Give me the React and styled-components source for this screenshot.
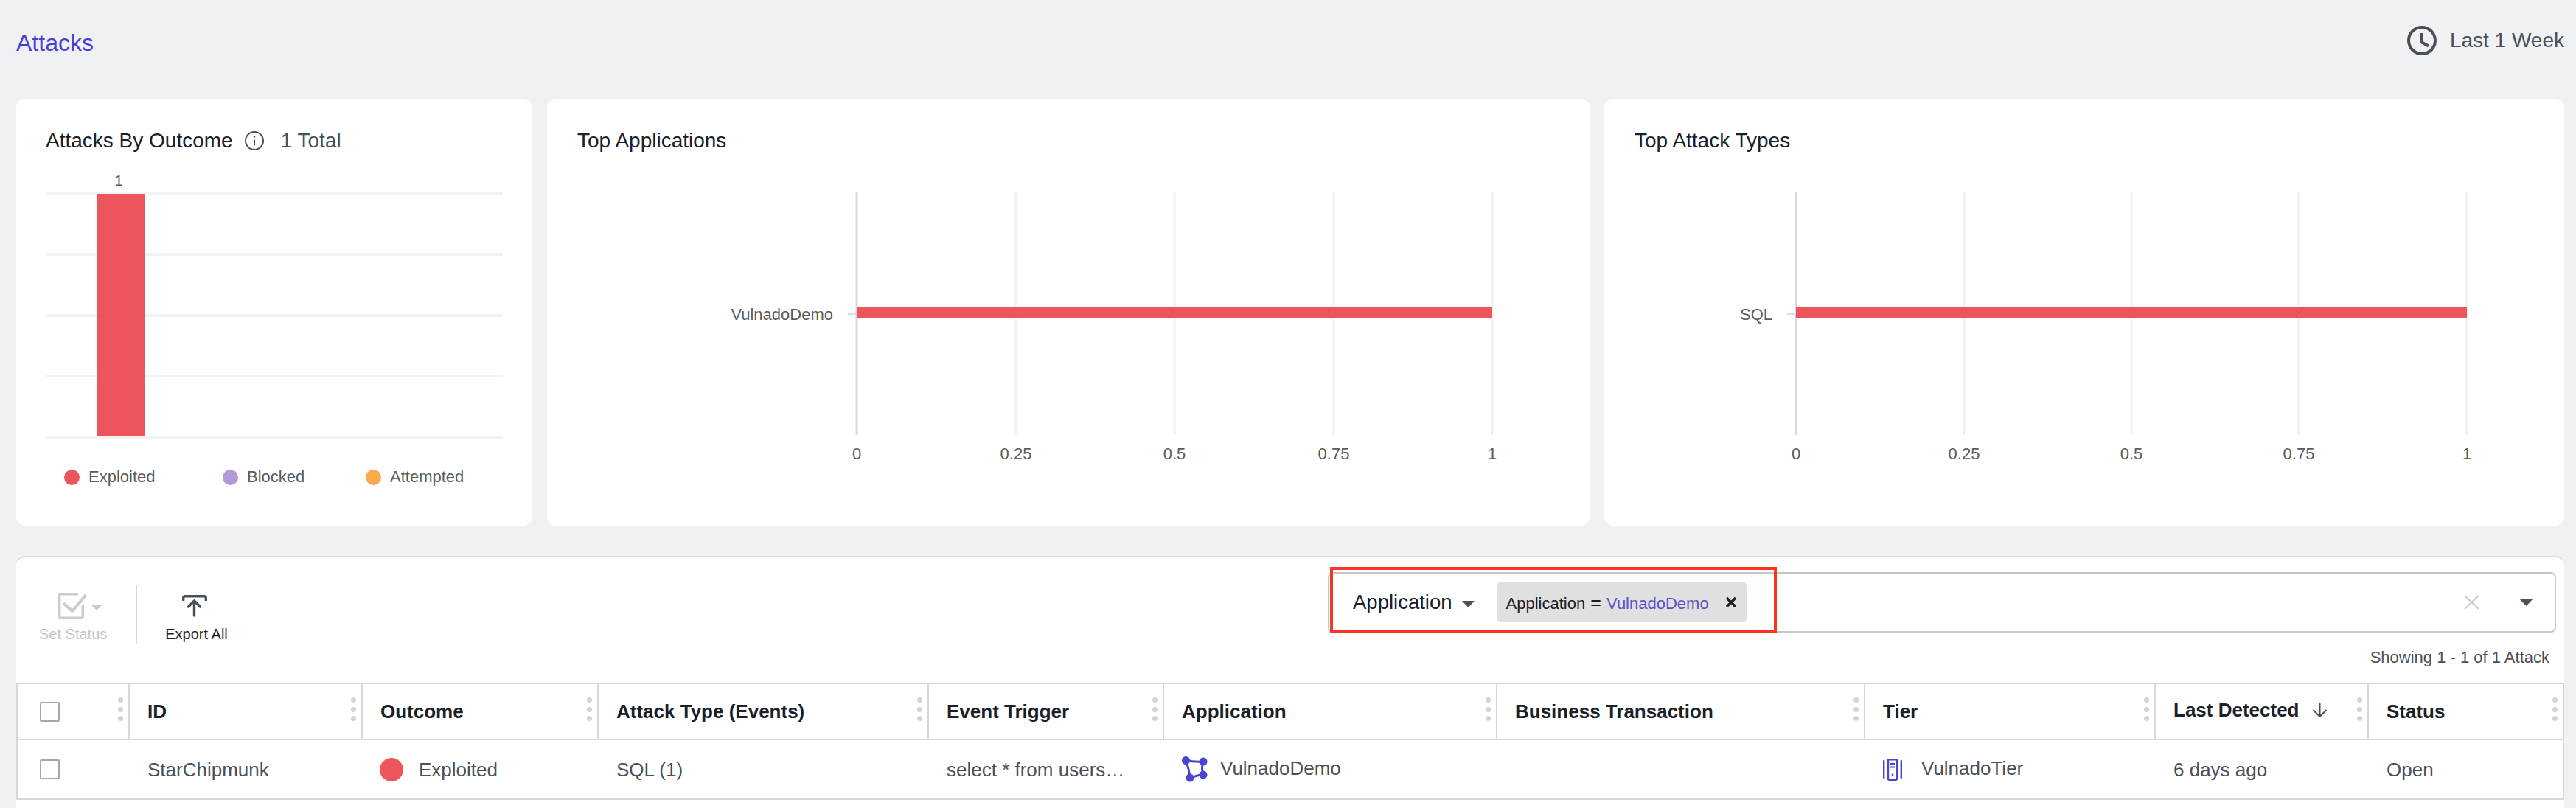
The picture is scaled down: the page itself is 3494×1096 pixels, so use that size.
import React from 'react';
import styled, { createGlobalStyle } from 'styled-components';

const TEXT = '#4a5058';
const DARK = '#1a2027';
const RED = '#ec555c';
const INDIGO = '#4b43d1';
const COLS = '152px 316px 320px 448px 319px 452px 499px 394px 289px 265px';

const Global = createGlobalStyle`
  html, body { margin: 0; padding: 0; background: #f0f1f3; }
  body { font-family: "Liberation Sans", Arial, sans-serif; }
  * { box-sizing: border-box; }
`;

const Page = styled.div`
  width: 3494px; height: 1096px; overflow: hidden;
  padding: 0 16px 0 22px; background: #f0f1f3;
  display: flex; flex-direction: column;
`;
const Header = styled.header`
  height: 110px; margin-bottom: 24px;
  display: flex; align-items: center; justify-content: space-between;
`;
const PageTitle = styled.a`
  font-size: 32px; line-height: 40px; color: #4a3fd4; padding-top: 6px;
`;
const TimeRange = styled.div`
  display: flex; align-items: center; gap: 18px;
  font-size: 28px; line-height: 40px; color: ${TEXT};
`;
const Cards = styled.section`
  display: grid; grid-template-columns: 700px 1414px 1302px; gap: 20px;
  height: 579px; flex: none;
`;
const Card = styled.article`
  background: #fff; border-radius: 12px; padding: 41px 0 0 ${p => p.$inset}px;
  min-width: 0;
`;
const CardHead = styled.div`
  display: flex; align-items: center; height: 32px;
`;
const CardTitle = styled.h2`
  margin: 0; font-size: 28px; line-height: 32px; font-weight: 400; color: ${DARK};
`;
const InfoWrap = styled.span`
  display: flex; margin: 0 23px 0 16px;
`;
const TotalText = styled.span`
  font-size: 28px; line-height: 32px; color: ${TEXT};
`;
const ChartSvg = styled.svg`
  display: block; margin-top: ${p => p.$top}px; overflow: visible;
`;
const AxisLabel = styled.text`
  font-family: "Liberation Sans", Arial, sans-serif; font-size: ${p => p.$size || 22}px; fill: #5b5b5b;
`;
const Legend = styled.div`
  display: grid; grid-template-columns: 215px 194px auto;
  margin-top: 35px; padding-left: 25px;
`;
const LegendItem = styled.div`
  display: flex; align-items: center; gap: 12px;
  font-size: 22px; line-height: 24px; color: #5b5b5b;
`;
const LegendDot = styled.span`
  width: 21px; height: 21px; border-radius: 50%; background: ${p => p.$color};
`;
const Panel = styled.section`
  flex: 1; margin-top: 41px; background: #fff;
  border-top: 2px solid #dcdcdc; border-radius: 12px 12px 0 0;
`;
const Toolbar = styled.div`
  height: 170px; display: flex; justify-content: space-between;
`;
const Actions = styled.div`
  display: flex; padding: 38px 0 0 31px; height: 117px;
`;
const Action = styled.div`
  display: flex; flex-direction: column; align-items: center;
  padding-top: 10px; height: 79px;
  font-size: 20px; line-height: 24px; color: ${p => p.$disabled ? '#c4c4c4' : DARK};
`;
const ActionIcon = styled.div`
  height: 36px; margin-bottom: 8px; display: flex; align-items: flex-start; gap: 6px;
  margin-left: ${p => p.$shiftRight || 0}px;
  margin-right: ${p => p.$shiftLeft || 0}px;
`;
const CaretSlot = styled.span`
  display: flex; margin-top: 17px;
`;
const Divider = styled.div`
  width: 2px; height: 79px; background: #d8d8d8; margin: 0 38px 0 39px;
`;
const FilterArea = styled.div`
  width: 1666px; margin: 20px 11px 0 0;
`;
const FilterBox = styled.div`
  position: relative; height: 82px; border: 2px solid #c6c6c6; border-radius: 7px;
  display: flex; align-items: center; padding: 0 29px 0 32px;
`;
const FilterKey = styled.span`
  font-size: 27.5px; line-height: 32px; color: ${DARK};
`;
const KeyCaret = styled.span`
  display: flex; margin: 4px 31px 0 13px;
`;
const Chip = styled.div`
  width: 338px; height: 54px; background: #e0e0e0; border-radius: 4px;
  display: flex; align-items: center; justify-content: space-between;
  padding: 0 14px 0 12px; font-size: 22px; color: ${DARK};
`;
const ChipText = styled.span`
  line-height: 26px; padding-top: 4px; white-space: pre;
`;
const ChipEquals = styled.span`
  font-size: 25px; line-height: 20px; margin-left: 1px;
`;
const ChipValue = styled.span`
  color: #5a50c8; margin-left: 1px;
`;
const FilterEnd = styled.div`
  margin-left: auto; display: flex; align-items: center; gap: 54px;
`;
const Highlight = styled.div`
  position: absolute; left: 1px; top: -9px; width: 606px; height: 90px;
  border: 4px solid #fa3420; pointer-events: none;
`;
const Showing = styled.div`
  margin: 22px 9px 0 0; text-align: right;
  font-size: 22px; line-height: 24px; color: ${TEXT};
`;
const HeadRow = styled.div`
  display: grid; grid-template-columns: ${COLS};
  border: 2px solid #d8d8d8; border-width: 2px 0 2px 2px; height: 78px;
`;
const HeadCell = styled.div`
  display: flex; align-items: center; justify-content: space-between;
  padding: 0 7px 0 ${p => p.$pad || 24}px; border-right: 2px solid #d8d8d8;
  font-size: 26px; font-weight: 700; color: ${DARK};
`;
const HeadLabel = styled.span`
  display: flex; align-items: center; gap: 17px; line-height: 30px;
  padding-bottom: ${p => p.$raised ? 4 : 0}px;
`;
const Kebab = styled.span`
  display: flex; flex-direction: column; gap: 5.5px; margin-top: -6px;
`;
const KebabDot = styled.i`
  display: block; width: 7px; height: 7px; border-radius: 50%; background: #d4d4d4;
`;
const BodyRow = styled.div`
  display: grid; grid-template-columns: ${COLS}; height: 81px;
  border: 2px solid #d8d8d8; border-width: 0 0 2px 2px; position: relative;
  border-right: 2px solid #d8d8d8;
`;
const BodyCell = styled.div`
  display: flex; align-items: center; min-width: 0; white-space: nowrap;
  padding-left: ${p => p.$pad || 24}px; gap: ${p => p.$gap || 0}px;
  font-size: 26px; line-height: 30px; color: ${TEXT};
`;
const Raised = styled.span`
  margin-top: -4px;
`;
const Check = styled.span`
  display: block; width: 27px; height: 27px; border: 2px solid #a5a8ab; border-radius: 2px;
`;
const OutcomeDot = styled.span`
  width: 32px; height: 32px; border-radius: 50%; background: ${RED}; flex: none; margin-left: -1px;
`;

const Caret = ({ w = 17, h = 9, color = TEXT }) => (
  <svg width={w} height={h} viewBox="0 0 17 9" preserveAspectRatio="none"><path d="M0 0h17L8.5 9z" fill={color} /></svg>
);

const Clock = () => (
  <svg width="40" height="40" viewBox="0 0 40 40" fill="none" stroke={TEXT} strokeWidth="4">
    <circle cx="20" cy="20" r="18" />
    <path d="M19 10v12l10 5.5" />
  </svg>
);

const Info = () => (
  <svg width="26" height="26" viewBox="0 0 26 26" fill="none" stroke={TEXT} strokeWidth="2">
    <circle cx="13" cy="13" r="12" />
    <path d="M13 11.5v7.5" />
    <circle cx="13" cy="7.5" r="1.2" fill={TEXT} stroke="none" />
  </svg>
);

const SetStatusIcon = () => (
  <svg width="39" height="36" viewBox="0 0 39 36" fill="none" stroke="#cccccc" strokeWidth="3.4">
    <path d="M27 1.7H4Q1.7 1.7 1.7 4V32Q1.7 34.3 4 34.3H31Q33.3 34.3 33.3 32V17" />
    <path d="M7 14l12 11L37.5 3" strokeWidth="4.2" />
  </svg>
);

const ExportIcon = () => (
  <svg width="34" height="36" viewBox="0 0 34 36" fill="none" stroke={TEXT} strokeWidth="3.4">
    <path d="M1.7 11V7Q1.7 4.7 4 4.7H30Q32.3 4.7 32.3 7V11" />
    <path d="M16.5 31V11M8.5 19l8-8 8 8" strokeLinecap="round" />
  </svg>
);

const CloseIcon = ({ w, h, sw, color }) => (
  <svg width={w} height={h} viewBox={`0 0 ${w} ${h}`} fill="none" stroke={color} strokeWidth={sw}>
    <path d={`M1 1L${w - 1} ${h - 1}M${w - 1} 1L1 ${h - 1}`} />
  </svg>
);

const ArrowDown = () => (
  <svg width="21" height="20" viewBox="0 0 21 20" fill="none" stroke={TEXT} strokeWidth="2">
    <path d="M10.5 0v19M1.5 10l9 9 9-9" />
  </svg>
);

const AppIcon = () => (
  <svg width="35" height="35" viewBox="0 0 35 35" fill="none" stroke={INDIGO} strokeWidth="3">
    <path d="M5 5Q17 8 29 7Q26 16 29 25Q20 25 11 30Q10 17 5 5z" />
    <g fill={INDIGO} stroke="none">
      <circle cx="5.5" cy="5.5" r="5.5" />
      <circle cx="29" cy="7" r="5.5" />
      <circle cx="11" cy="29" r="5.5" />
      <circle cx="29" cy="25" r="5.5" />
    </g>
  </svg>
);

const TierIcon = () => (
  <svg width="26" height="30" viewBox="0 0 26 30" fill="none" stroke={INDIGO}>
    <rect x="7" y="1.2" width="12" height="27.6" rx="1.5" strokeWidth="2.4" />
    <path d="M1.2 3v23M24.8 3v23" strokeWidth="2.4" strokeLinecap="round" />
    <path d="M10 7h6M10 11.5h6" strokeWidth="2" />
    <circle cx="13" cy="22" r="1.4" fill={INDIGO} stroke="none" />
  </svg>
);

const OutcomeChart = () => (
  <ChartSvg $top={29} width="620" height="364" viewBox="0 0 620 364">
    {[27, 109, 192, 274, 357].map(y => (
      <rect key={y} x="0" y={y - 2} width="620" height="4" fill="#f1f2f3" />
    ))}
    <rect x="70" y="27" width="64" height="329" fill={RED} />
    <AxisLabel x="99" y="16" $size={20} textAnchor="middle">1</AxisLabel>
  </ChartSvg>
);

const TICK_TEXT = ['0', '0.25', '0.5', '0.75', '1'];

const HorizontalChart = ({ width, ticks, label }) => {
  const [x0] = ticks;
  const xEnd = ticks[4];
  return (
    <ChartSvg $top={39} width={width} height="400" viewBox={`0 0 ${width} 400`}>
      {ticks.slice(1).map(x => (
        <rect key={x} x={x - 1.5} y="14" width="3" height="330" fill="#f0f0f0" />
      ))}
      <rect x={x0 - 1.5} y="14" width="3" height="330" fill="#d8d8d8" />
      <rect x={x0 - 12} y="178" width="12" height="3" fill="#dddddd" />
      <rect x={x0} y="170" width={xEnd - x0} height="16" fill={RED} />
      <AxisLabel x={x0 - 32} y="188" textAnchor="end">{label}</AxisLabel>
      {ticks.map((x, i) => (
        <AxisLabel key={x} x={x} y="377" textAnchor="middle">{TICK_TEXT[i]}</AxisLabel>
      ))}
    </ChartSvg>
  );
};

const Dots = () => (
  <Kebab><KebabDot /><KebabDot /><KebabDot /></Kebab>
);

const columns = ['ID', 'Outcome', 'Attack Type (Events)', 'Event Trigger', 'Application', 'Business Transaction', 'Tier'];

export default function App() {
  return (
    <Page>
      <Global />
      <Header>
        <PageTitle>Attacks</PageTitle>
        <TimeRange><Clock />Last 1 Week</TimeRange>
      </Header>
      <Cards>
        <Card $inset={40}>
          <CardHead>
            <CardTitle>Attacks By Outcome</CardTitle>
            <InfoWrap><Info /></InfoWrap>
            <TotalText>1 Total</TotalText>
          </CardHead>
          <OutcomeChart />
          <Legend>
            <LegendItem><LegendDot $color={RED} />Exploited</LegendItem>
            <LegendItem><LegendDot $color="#b09bd6" />Blocked</LegendItem>
            <LegendItem><LegendDot $color="#f7aa4e" />Attempted</LegendItem>
          </Legend>
        </Card>
        <Card $inset={41}>
          <CardHead><CardTitle>Top Applications</CardTitle></CardHead>
          <HorizontalChart width={1340} ticks={[379, 595, 810, 1026, 1241]} label="VulnadoDemo" />
        </Card>
        <Card $inset={41}>
          <CardHead><CardTitle>Top Attack Types</CardTitle></CardHead>
          <HorizontalChart width={1230} ticks={[219, 447, 674, 901, 1129]} label="SQL" />
        </Card>
      </Cards>
      <Panel>
        <Toolbar>
          <Actions>
            <Action $disabled>
              <ActionIcon $shiftRight={18}>
                <SetStatusIcon />
                <CaretSlot><Caret w={14} h={7} color="#cccccc" /></CaretSlot>
              </ActionIcon>
              Set Status
            </Action>
            <Divider />
            <Action>
              <ActionIcon $shiftLeft={5}><ExportIcon /></ActionIcon>
              Export All
            </Action>
          </Actions>
          <FilterArea>
            <FilterBox>
              <FilterKey>Application</FilterKey>
              <KeyCaret><Caret /></KeyCaret>
              <Chip>
                <ChipText>Application <ChipEquals>=</ChipEquals> <ChipValue>VulnadoDemo</ChipValue></ChipText>
                <CloseIcon w={14} h={14} sw={3.4} color={DARK} />
              </Chip>
              <FilterEnd>
                <CloseIcon w={21} h={20} sw={2.4} color="#cccccc" />
                <Caret w={19} h={10} />
              </FilterEnd>
              <Highlight />
            </FilterBox>
            <Showing>Showing 1 - 1 of 1 Attack</Showing>
          </FilterArea>
        </Toolbar>
        <HeadRow>
          <HeadCell $pad={30}><Check /><Dots /></HeadCell>
          {columns.map(c => (
            <HeadCell key={c}><HeadLabel>{c}</HeadLabel><Dots /></HeadCell>
          ))}
          <HeadCell><HeadLabel $raised>Last Detected<ArrowDown /></HeadLabel><Dots /></HeadCell>
          <HeadCell><HeadLabel>Status</HeadLabel><Dots /></HeadCell>
        </HeadRow>
        <BodyRow>
          <BodyCell $pad={30}><Check /></BodyCell>
          <BodyCell>StarChipmunk</BodyCell>
          <BodyCell $gap={21}><OutcomeDot />Exploited</BodyCell>
          <BodyCell>SQL (1)</BodyCell>
          <BodyCell>select * from users…</BodyCell>
          <BodyCell $gap={17}><AppIcon /><Raised>VulnadoDemo</Raised></BodyCell>
          <BodyCell />
          <BodyCell $gap={26}><TierIcon /><Raised>VulnadoTier</Raised></BodyCell>
          <BodyCell>6 days ago</BodyCell>
          <BodyCell>Open</BodyCell>
        </BodyRow>
      </Panel>
    </Page>
  );
}
